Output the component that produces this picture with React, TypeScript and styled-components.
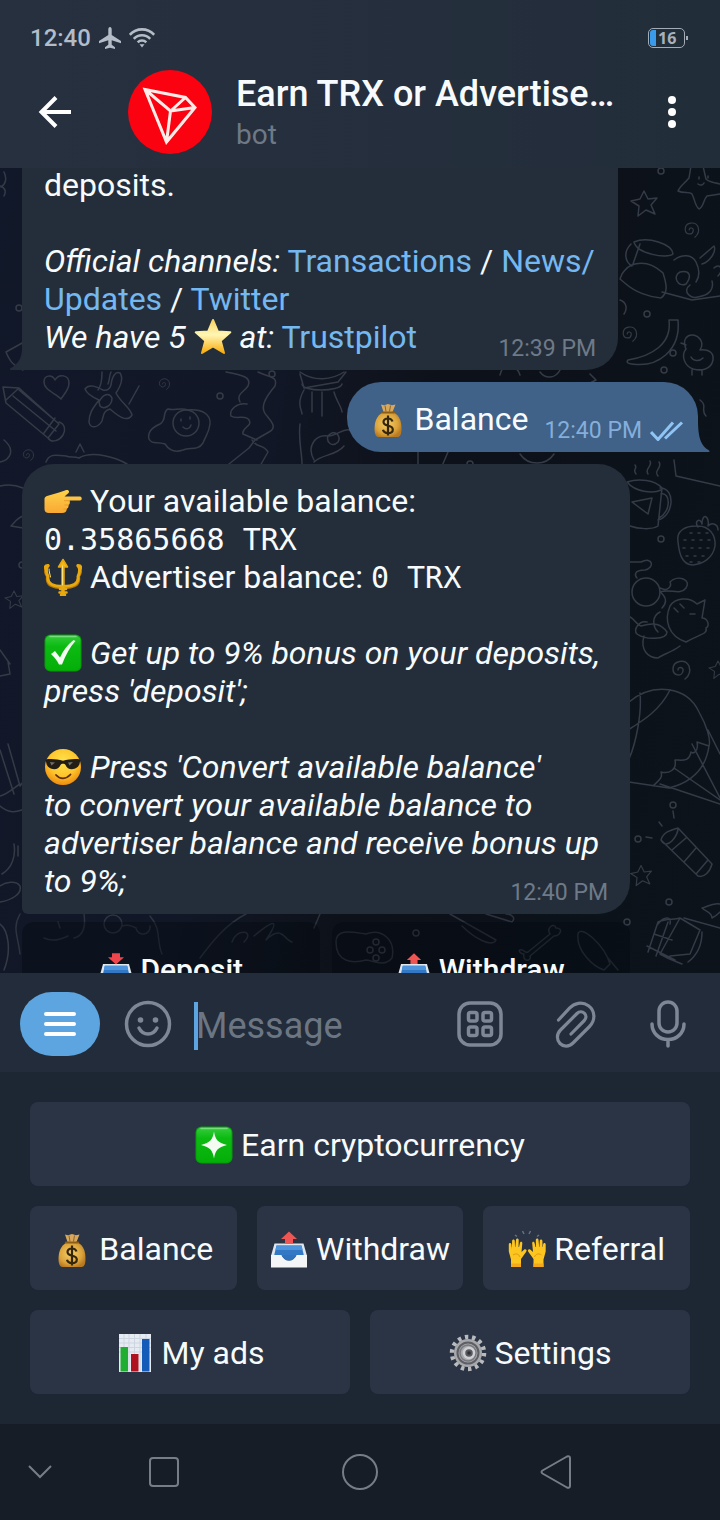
import React from 'react';
import styled, { createGlobalStyle, css } from 'styled-components';

const GlobalStyle = createGlobalStyle`
  *, *::before, *::after { box-sizing: border-box; }
  html, body, #root { height: 100%; }
  body { margin: 0; background: #161d27; font-family: Roboto, "Noto Sans", sans-serif; }
  button, input { font: inherit; color: inherit; border: 0; margin: 0; padding: 0; background: none; }
  button { cursor: pointer; }
  svg { display: block; }
`;

/* ---------- layout ---------- */

const Screen = styled.div`
  display: flex;
  flex-direction: column;
  height: 100vh;
  overflow: hidden;
  color: #f7fbfd;
`;

const Top = styled.header`
  flex: none;
  background: linear-gradient(90deg, #27303f, #222d3a);
`;

const StatusBar = styled.div`
  display: flex;
  align-items: center;
  gap: 8px;
  height: 56px;
  padding: 20px 32px 0 30px;
  color: #b4bcc8;
  font-size: 24px;
  line-height: 36px;
`;

const Clock = styled.span`
  font-weight: 500;
`;

const Spacer = styled.span`
  flex: 1;
`;

const Battery = styled.span`
  display: flex;
  align-items: center;
  gap: 1px;
`;

const BatteryCase = styled.span`
  display: flex;
  align-items: center;
  gap: 2px;
  width: 37px;
  height: 20px;
  padding: 0 1px;
  border: 1px solid #a3abb7;
  border-radius: 5px;
  font: 700 16px/18px "Noto Sans", sans-serif;
  color: #a9b0bb;
`;

const BatteryLevel = styled.span`
  width: 6px;
  height: 16px;
  border-radius: 3px 0 0 3px;
  background: #3a9bec;
`;

const BatteryTip = styled.span`
  width: 2px;
  height: 4px;
  background: #a3abb7;
`;

const TitleBar = styled.div`
  display: flex;
  align-items: center;
  height: 112px;
  padding: 0 24px 0 31px;
`;

const IconButton = styled.button<{ $width?: number }>`
  flex: none;
  display: grid;
  place-items: center;
  width: ${(p) => p.$width ?? 48}px;
  height: 48px;
`;

const Avatar = styled.div`
  flex: none;
  margin: 0 24px 0 49px;
`;

const Names = styled.div`
  flex: 1;
  min-width: 0;
`;

const Title = styled.h1`
  margin: 0 0 4px;
  font-size: 36px;
  line-height: 42px;
  font-weight: 500;
  white-space: nowrap;
  overflow: hidden;
`;

const Subtitle = styled.p`
  margin: 0;
  font-size: 28px;
  line-height: 32px;
  color: #6f7985;
`;

const Chat = styled.main`
  position: relative;
  flex: 1;
  min-height: 0;
  overflow: hidden;
  background: linear-gradient(100deg, #111829 0%, #111726 36%, #0d1119 56%, #0c131a 100%);
`;

const Wallpaper = styled.svg`
  position: absolute;
  inset: 0;
  width: 100%;
  height: 100%;
`;

const Messages = styled.div`
  position: relative;
  display: flex;
  flex-direction: column;
  align-items: flex-start;
  padding: 0 22px;
  margin-top: -2px;
`;

type BubbleKind = 'continued' | 'outgoing' | 'withKeyboard';

const bubbleKinds = {
  continued: css`
    width: 596px;
    max-width: 100%;
    padding-top: 0;
    border-radius: 0 0 32px 0;
    background: #242e3a;
  `,
  outgoing: css`
    align-self: flex-end;
    padding-right: 14px;
    border-radius: 34px 34px 0 34px;
    background: #406188;
  `,
  withKeyboard: css`
    width: 608px;
    max-width: 100%;
    border-radius: 32px 32px 32px 6px;
    background: #242e3b;
  `,
};

const Bubble = styled.article<{ $kind: BubbleKind }>`
  position: relative;
  padding: 18px 22px 14px;
  margin-bottom: 12px;
  font-size: 32px;
  line-height: 38px;
  ${(p) => bubbleKinds[p.$kind]}
`;

const Tail = styled.svg<{ $side: 'left' | 'right' }>`
  position: absolute;
  bottom: 0;
  ${(p) => p.$side}: -12px;
`;

const Text = styled.p`
  margin: 0;
`;

const LastLine = styled.div`
  display: flex;
  align-items: flex-end;
  justify-content: space-between;
  gap: 16px;
`;

const Meta = styled.span<{ $out?: boolean }>`
  display: flex;
  align-items: center;
  gap: 8px;
  margin-bottom: -7px;
  font-size: 23px;
  line-height: 28px;
  white-space: nowrap;
  color: ${(p) => (p.$out ? '#85aedb' : '#6f7a88')};
`;

const Link = styled.a`
  color: #74b8f2;
  text-decoration: none;
`;

const Code = styled.code`
  font-family: "DejaVu Sans Mono", monospace;
  font-size: 30px;
  line-height: 30px;
`;

const EmojiSvg = styled.svg`
  display: inline-block;
  vertical-align: top;
`;

const InlineKeyboard = styled.div`
  display: grid;
  grid-template-columns: 1fr 1fr;
  gap: 12px;
  width: 608px;
  max-width: 100%;
  margin-top: -4px;
`;

const InlineKey = styled.button`
  height: 96px;
  border-radius: 12px;
  background: rgba(2, 8, 14, 0.36);
  font-size: 30px;
  line-height: 36px;
  font-weight: 500;
`;

const Composer = styled.form`
  flex: none;
  display: flex;
  align-items: center;
  height: 99px;
  padding: 3px 28px 0 20px;
  background: #222c3a;
`;

const MenuButton = styled.button`
  flex: none;
  display: grid;
  place-items: center;
  width: 80px;
  height: 64px;
  margin-right: 24px;
  border-radius: 32px;
  background: #5da5e0;
`;

const Field = styled.label`
  position: relative;
  flex: 1;
  min-width: 0;
  display: flex;
  align-items: center;
  margin-left: 24px;
  padding-top: 4px;
`;

const Caret = styled.span`
  position: absolute;
  left: -2px;
  width: 4px;
  height: 48px;
  background: #5da5e0;
`;

const MessageInput = styled.input`
  width: 100%;
  height: 48px;
  font-size: 36px;
  line-height: 42px;
  outline: none;
  caret-color: transparent;
  &::placeholder { color: #6c7683; opacity: 1; }
`;

const Tools = styled.div`
  display: flex;
  gap: 46px;
`;

const ReplyKeyboard = styled.div`
  flex: none;
  display: flex;
  flex-direction: column;
  gap: 20px;
  padding: 30px;
  background: #1d2633;
`;

const KeyRow = styled.div`
  display: flex;
  gap: 20px;
`;

const Key = styled.button`
  flex: 1 1 0;
  min-width: 0;
  height: 84px;
  padding-top: 2px;
  border-radius: 8px;
  background: #2a3445;
  font-size: 32px;
  line-height: 38px;
  white-space: nowrap;
`;

const SystemNav = styled.nav`
  flex: none;
  display: grid;
  grid-template-columns: 66px 1fr 1fr 1fr 66px;
  height: 96px;
  background: #161d27;
`;

const NavButton = styled.button<{ $end?: boolean }>`
  display: flex;
  align-items: center;
  justify-content: ${(p) => (p.$end ? 'flex-end' : 'center')};
  padding-right: ${(p) => (p.$end ? 8 : 0)}px;
`;

/* ---------- emoji ---------- */

type EmojiName =
  | 'star' | 'bag' | 'point' | 'trident' | 'check' | 'cool'
  | 'inbox' | 'outbox' | 'sparkle' | 'hands' | 'chart' | 'gear';

const tray = (
  <>
    <path d="M4.500 13.500h29L37 26H1z" fill="#dfe7ee" />
    <path d="M6.500 15.500h25l2.500 10.500H4z" fill="#3378c4" />
    <path d="M6.500 15.500h25l1 4.500h-27z" fill="#4d94dd" />
    <path d="M1 25h10.500c1.500 3.500 4 5.500 7.500 5.500s6-2 7.500-5.500H37v12.500H1z" fill="#f4f5f6" />
    <path d="M11.500 25h15c-1.500 3.500-4 5.500-7.500 5.500s-6-2-7.500-5.500z" fill="#2f72bd" />
  </>
);

const greenTile = (
  <>
    <rect x="0.500" y="0.500" width="37" height="37" rx="6" fill="#079a0b" />
    <rect x="1.500" y="1.500" width="35" height="35" rx="5" fill="url(#tile)" />
    <path d="M6 2.500h26" stroke="#75e07a" strokeWidth="1.500" strokeLinecap="round" />
  </>
);

const hand = (
  <>
    <path
      d="M3 37V29.500L.8 21.500V14.500c0-2 2.400-2 2.600 0l.5 5 .2-8.500c.1-2 2.600-2 2.700 0l.3 8L8 10c.1-2 2.600-2 2.700 0l-.2 9.500 1.400-6.500c.5-2 2.700-1.500 2.400.4L13.500 22l2.500-2.200c1.800-1.300 3.300.6 2.200 2L13 29v8z"
      fill="#fdc51f"
    />
    <path d="M3.500 17v7h8v-7z" fill="#fdc51f" />
    <path d="M5 25c3-2 6-1 7 2" stroke="#e39a12" strokeWidth="1" fill="none" />
    <path d="M3 33.500h10V37H3z" fill="#f3a91a" />
  </>
);

const emojiArt: Record<EmojiName, React.ReactNode> = {
  star: (
    <path
      d="M19 2l4.800 11.500 12.500.8-9.600 8.400 3.300 12.300L19 28.500 8 35l3.300-12.300-9.600-8.400 12.500-.8z"
      fill="url(#gold)"
      stroke="url(#gold)"
      strokeWidth="2"
      strokeLinejoin="round"
    />
  ),
  bag: (
    <>
      <path d="M12 4.500l3 .8L19 4l4 1.300 3.500-.8L23.500 12h-9z" fill="#d9a85c" />
      <path d="M16 5.500l1 6M21.500 5.500l-1 6" stroke="#8f6426" strokeWidth="1" />
      <path d="M13.500 12.500h11.500C31 16 32.500 22 32.500 29c0 5-1.500 8-4 8h-19c-2.500 0-4-3-4-8 0-7 2-13 8-16.500z" fill="url(#bag)" />
      <path d="M13 12.500h12" stroke="#8b5d16" strokeWidth="2.200" strokeLinecap="round" />
      <path d="M23.500 21.500c-.6-2-2.300-3-4.500-3-2.600 0-4.500 1.300-4.500 3.600 0 5 9.300 2.400 9.300 7.300 0 2.300-2 3.700-4.800 3.700-2.500 0-4.500-1.200-5-3.300M19 15.500v20" fill="none" stroke="#33260d" strokeWidth="2.200" />
    </>
  ),
  point: (
    <>
      <path
        d="M.5 17c0-1.500 1-2.500 2.500-3L15 10.500 21 8.500c3-1.300 5 .5 3.500 2.500L20.500 14.500H36c2.300 0 2.300 4 0 4H25.500c.7 2 .4 3.500-1 4.500.3 2-.4 3.300-1.800 4 0 2.500-1.500 4-4.700 4H5c-3 0-4.500-1.500-4.500-4z"
        fill="url(#skin)"
      />
      <path d="M25 18.700h-5M24.500 23h-4M22.500 27h-3" stroke="#e79c25" strokeWidth="1" fill="none" />
    </>
  ),
  trident: (
    <g fill="none" stroke="#e8a80f" strokeLinecap="round" strokeLinejoin="round">
      <path d="M4 8C0 10 .8 14 3.500 18.500 2 27 8 29.500 19 29.500s17-2.500 15.500-11C37.200 14 38 10 34 8" stroke="#b87808" strokeWidth="3" />
      <path d="M4 7.500c-2.500 3-2 6.500 0 11-1 7.500 5 9.800 15 9.800s16-2.300 15-9.800c2-4.500 2.500-8 0-11" strokeWidth="3" />
      <path d="M4 7.500C1 7 .5 9 1.500 11M34 7.500c3-.5 3.500 1.500 2.500 3.500" strokeWidth="2.200" />
      <path d="M19 7v27" strokeWidth="3.500" />
      <path d="M19 1.500l4.500 7.500h-9z" fill="#f2b916" strokeWidth="1.500" />
      <path d="M16 31h6M15.500 34.500h7M17 37h4" strokeWidth="2.500" />
      <path d="M18.500 8v19M5 11c0 3 1 5 1.500 8" stroke="#ffe27a" strokeWidth="1" />
    </g>
  ),
  check: (
    <>
      {greenTile}
      <path d="M7 20l4-3 5 6.500C19 17 23 11 29.500 6l2 1C26 13 21.500 21 18 30.500h-3C13 26.500 10 22.500 7 20z" fill="#f4fbf3" />
    </>
  ),
  cool: (
    <>
      <circle cx="19" cy="19" r="18" fill="url(#face)" />
      <path d="M1.500 11.500c7-1 12 0 17.500 1.300 5.500-1.300 10.500-2.300 17.500-1.300l-.8 3.500c-1 7-12 8.500-14.200 2-.7-1.800-4.300-1.800-5 0-2.200 6.500-13.200 5-14.200-2z" fill="#221e16" />
      <path d="M6 14l5 .6-3.500 3zM24 14.500l5-.4-3.500 3.300z" fill="#6f7066" />
      <path d="M12 27c4 4.500 10 4.500 14.500-.5" fill="none" stroke="#5d2d08" strokeWidth="1.800" strokeLinecap="round" />
    </>
  ),
  inbox: (
    <>
      {tray}
      <path d="M14.500 1.500h9V6h4.500l-9 8-9-8h4.500z" fill="#ee464c" />
    </>
  ),
  outbox: (
    <>
      {tray}
      <path d="M19 1.500L27 9h-4v4.500h-8V9h-4z" fill="#ef5552" />
    </>
  ),
  sparkle: (
    <>
      {greenTile}
      <path d="M19 5.500c1.500 8.500 3.500 11 13 13.500-9.500 2.500-11.500 5-13 13.500C17.500 24 15.500 21.500 6 19c9.500-2.500 11.500-5 13-13.500z" fill="#f4fbf3" />
    </>
  ),
  hands: (
    <>
      <g>{hand}</g>
      <g transform="matrix(-1 0 0 1 38.500 0)">{hand}</g>
      <path d="M7 5l2 1.500M14.500 1l1.500 3M22.500 1L21 4M31 5l-2 1.500" stroke="#66717f" strokeWidth="1.500" />
    </>
  ),
  chart: (
    <>
      <path d="M3 0h32v38H3z" fill="#e6ebf2" />
      <path d="M3 4.500h32M3 9h32M3 13.500h32M3 18h32M8 0v13M13 0v38M18.500 0v20M24 0v38M30 0v5" stroke="#cdd5e1" strokeWidth="1" />
      <path d="M4.500 13h7.500v24.500H4.500z" fill="#1fae31" />
      <path d="M15 20h7.500v17.500H15z" fill="#b0111f" />
      <path d="M26 5h7.500v32.500H26z" fill="#155cb8" />
    </>
  ),
  gear: (
    <>
      <circle cx="19" cy="19" r="16" fill="none" stroke="#b9babd" strokeWidth="4.500" strokeDasharray="3.400 3.780" />
      <circle cx="19" cy="19" r="14" fill="#a7a8ac" />
      <circle cx="19" cy="19" r="10.500" fill="none" stroke="#5d5f64" strokeWidth="2" />
      <circle cx="19" cy="19" r="8" fill="none" stroke="#77797e" strokeWidth="1.500" />
      <circle cx="20" cy="19" r="5" fill="#56585d" stroke="#cfd0d3" strokeWidth="2.500" />
      <circle cx="20" cy="19" r="1.800" fill="#2c323c" />
    </>
  ),
};

const Emoji = ({ name, size = 38 }: { name: EmojiName; size?: number }) => (
  <EmojiSvg width={size} height={size} viewBox="0 0 38 38" aria-hidden="true">
    {emojiArt[name]}
  </EmojiSvg>
);

const GradientDefs = styled.svg`
  position: absolute;
`;

const SharedGradients = () => (
  <GradientDefs width="0" height="0" aria-hidden="true">
    <defs>
      <linearGradient id="gold" x1="0" y1="0" x2="0" y2="1">
        <stop offset="0" stopColor="#f6d263" />
        <stop offset="0.450" stopColor="#fff6b4" />
        <stop offset="1" stopColor="#f9ac0b" />
      </linearGradient>
      <linearGradient id="skin" x1="0" y1="0" x2="0" y2="1">
        <stop offset="0" stopColor="#ffd24a" />
        <stop offset="1" stopColor="#f9a832" />
      </linearGradient>
      <linearGradient id="tile" x1="0" y1="0" x2="0" y2="1">
        <stop offset="0" stopColor="#35cc3c" />
        <stop offset="0.300" stopColor="#0cbb12" />
        <stop offset="1" stopColor="#04ae08" />
      </linearGradient>
      <radialGradient id="face" cx="0.500" cy="0.350" r="0.650">
        <stop offset="0" stopColor="#ffe34d" />
        <stop offset="0.600" stopColor="#fdc52c" />
        <stop offset="1" stopColor="#f08c0e" />
      </radialGradient>
      <radialGradient id="bag" cx="0.450" cy="0.450" r="0.600">
        <stop offset="0" stopColor="#f6cf66" />
        <stop offset="0.700" stopColor="#dba23b" />
        <stop offset="1" stopColor="#b97a20" />
      </radialGradient>
    </defs>
  </GradientDefs>
);

/* ---------- wallpaper doodles ---------- */

const STAR = 'M0-13l4 8 9-1-6 7 4 9-9-4-8 6 1-10-8-5 9-2z';
const SWIRL = 'M-1 0c0-4 6-3 5 1-1 6-10 5-10-2 0-8 12-11 16-3 2 6 0 10-4 13';

const at = (x: number, y: number, d: string, scale = 1, turn = 0) => (
  <path key={`${x}-${y}`} transform={`translate(${x} ${y}) rotate(${turn}) scale(${scale})`} d={d} />
);

const Doodles = () => (
  <Wallpaper viewBox="0 168 720 805" preserveAspectRatio="xMidYMin slice" aria-hidden="true">
    <g fill="none" stroke="#353b46" strokeWidth="1.500" strokeLinecap="round" strokeLinejoin="round">
      {/* stars */}
      {at(644, 204, STAR)}
      {at(14, 600, STAR, 0.7)}
      {at(641, 876, STAR, 0.8)}
      {at(718, 670, STAR, 0.7)}
      {/* swirls */}
      {at(690, 230, SWIRL, 0.8)}
      {at(628, 334, SWIRL, 0.8)}
      {at(163, 384, SWIRL, 0.6)}
      {at(27, 455, SWIRL, 0.6)}
      {at(679, 670, SWIRL)}
      {/* bubbles */}
      {[[661, 171], [647, 314], [673, 353], [664, 370], [19, 308], [220, 396], [272, 374], [470, 464],
        [661, 539], [638, 839], [673, 805], [669, 902], [627, 922], [416, 933], [22, 565]].map(([x, y]) => (
        <circle key={`${x}.${y}`} cx={x} cy={y} r="3" />
      ))}
      {/* smiling starfish */}
      <path d="M720 184c-6-2-10-1-14-5l-3-13h-12l-2 12c-5 6-9 8-11 13 6 3 11 0 14 3 3 6 3 12 7 15 5-2 4-9 8-13l13-2M699 177v2M708 176v2M698 184c3 2 5 1 6-1" />
      {/* dog with cap */}
      <path d="M622 274c4-6 8-9 13-10 14-3 22 4 28 9 4 12 5 20-2 25-12-1-26-6-35-14l-6-5zM634 242c14-6 38 2 39 12-6 5-36 0-39-12zm-3 2c-8 8-6 18 1 22M640 244l-7 20M674 260c8-6 18-6 22 2 4 8 4 14 0 20M700 258l14-12c3 6-5 16-12 18M680 272c-8 4-2 16 6 12 6-8 4-14-6-12zM690 285c-8 6 0 14 8 12 12-2 16-8 14-16M714 268c6-6 10 2 4 8M662 292l30 8 28-4" />
      {/* wavy ribbon */}
      <path d="M628 360c24-4 44-16 41-40h9c3 30-20 48-46 44-4 0-6-2-4-4z" />
      {/* duckling */}
      <path d="M686 349c-6-14 8-18 14-10 3 4 2 8 0 11 8-1 14 2 13 10-2 10-12 11-20 9-9-3-12-14-7-20zM686 345l-5-2M703 358c-4 4-10 3-12-1M692 370v5M702 370v5" />
      {/* flower and heart near the edge */}
      <path d="M620 300c6 2 8 8 4 14M4 172c3 6 2 12-3 15M0 186c6 2 6 6 4 10M24 342L6 352c4 10 8 14 17 18" />
      <path d="M61 399c-6-6-17-9-17-17 0-7 8-8 11-2 4-7 14-5 14 3 0 7-5 11-8 16z" />
      {/* pencil */}
      <path d="M3 387l16 1 40 36-11 14-42-35zM6 400l13-12M13 396l43 35M19 390l39 33M44 433l11-15M48 438c4 6 12 2 15-3 3-5 2-11-4-13" />
      {/* propeller plane */}
      <path d="M99 400c-7-3-12-6-14-11 4-6 12-2 18 1 4 1 7-1 8-5 1-8 4-14 9-12 4 6 0 14-4 20 5 10 14 14 16 22-5 8-14 1-22-6-6 2-6 4-8 12-4 7-12 8-13 1 0-10 5-15 10-22zM99 402c4-8 10-10 13-4 0 8-8 12-12 8zM139 386l-10 18M102 372c0 10-1 14-4 18M108 384c2-5 1-8 3-12" />
      {/* fried egg */}
      <path d="M149 439c-2-8 4-12 11-15 7-4 2-12 8-15 6 2 12-2 20 1 14-1 23 4 22 14-1 9-4 11-7 19-5 8-13 4-20 7-8 3-14 0-18-6-8-3-13 1-16-5z" />
      <circle cx="186" cy="423" r="13" />
      <path d="M181 419v2M190 417v2M183 427c3 3 7 2 8-2" />
      {/* squid and octopus */}
      <path d="M226 372c16 3 26 5 22 14-4 6-12 8-8 16M247 404c-10-2-18 6-16 12M231 416c6 4 14-2 18 4s-8 8-6 14l14 6M258 372c12 6 20 4 17 14-10 12-16 22-8 30 5 6 10 12 2 16l-14 8-6 8-20 16M252 440c4 8 12 4 16 12l-8 14M300 374l4 14 34-6 8-10M302 384c0 8 38 8 40 0M300 372c14 10 32 8 44 0M304 390c-8 14-2 20-2 24M312 392v20M322 392v24M334 392c2 8 8 16 8 20M300 424c-2 16 2 28 2 40M314 460c-8-14 2-26 14-24 10 0 14-8 22-6M328 436c6-8 14 0 10 6-6 6-12 0-10-6zM344 446c-8 10-22 8-30 16" />
      {/* hedgehog behind the big message */}
      <path d="M46 462c4-10 12-6 20-6 4 2 8 0 13 2 14-8 38 0 48 6M76 452l4-8 4 8M0 462c10-2 16-12 4-22M0 486c8-2 16-1 23 2M23 516c-6 2-8 6-12 10l12 2M10 664l-10-14M0 676l10-2-2-12" />
      {/* shapes around the outgoing message */}
      <path d="M418 452v18c8 6 14 2 24-4l6-14M520 454c8 12 26 12 34 0M500 375c2-12 16-12 20 0M540 372c6 8 16 6 20-2M590 374l6 6-8 4M700 400c8 6 0 10 6 16" />
      {/* mug */}
      <path d="M627 482c12-4 28-2 35 6l-4 38c-6 4-20 3-28 0M627 482c8 10 26 12 34 8M661 494c10-2 10 18-2 24M660 488c16 0 14 28-2 32M632 502l20-4-4 16zM636 474c-4-5 2-5-1-9M648 474c-4-6 5-7 2-13M658 476c-5-6 5-8 1-14M674 460l2 16 44 10" />
      {/* strawberry */}
      <path d="M678 542c-2-12 8-16 18-16 14-1 20 10 19 20-2 12-12 18-22 19-12 0-14-14-15-23zM698 527c-4-6 2-10 4-3 0-12 8-8 6 2 4-4 10-2 10 4" />
      <path strokeDasharray="2 6" d="M684 540h28M683 548h28M686 556h22M690 533h18M690 562h12" />
      {/* monkey and cat */}
      <circle cx="646" cy="592" r="14" />
      <path d="M627 562h14c12-6 14 6 4 8-12 0-10 6-8 8M660 588c8 4 12-2 10-6 8-8 22-2 16 6-6 8-16 0-26 4 8 6 6 12 2 16M627 616c6 0 8 8 14 10 14-4 20-2 26 6 0 8-22 8-30 2-4-4 2-14 10-12M670 606c-6 14-2 30 16 36 14-8 22-8 20-14 4-2 2-10-4-10l3-18-8 4c-8-8-22-6-27 2zM680 604l4 4M678 612l-4-4M690 614h5M644 636c-4 14 4 22 14 22 6-4 14-6 22-12M660 612c-8 4-8 14-2 20" />
      {/* hot air balloon */}
      <path d="M629 702c24-20 58-16 70 10 8 14 12 28 10 34M629 782l40 6c16-4 36-14 40-42l-12-4c2 10-4 12-6 10-2 10-8 8-16 8 2 10-6 14-14 12 2 6-2 8-8 14M640 693c2 20-4 50-11 66M670 690c-10 20-26 30-42 40M660 784l60 20M674 768l46 32M692 744l28 54M708 730l12 24" />
      {/* torch */}
      <path d="M661 840c2-8 10-10 17-12l34 36c-2 8-8 14-14 12zM661 840c6 12 18-6 17-12M672 850l14-12M684 862l12-14M696 874l12-14M652 838l-6-1M662 826l-3-4M674 818l-1-7" />
      {/* gift, cat head and sleeping rocket */}
      <path d="M648 952l10-30c8-4 16-2 22-4l-20 36c10 6 18 8 22 10M647 946l28 14M654 934l18 6M668 922l-12 34M684 918l36 10M680 918l20 12-10 24-20 2M702 932c0 14-6 24-14 30M720 904c-8-2-14 4-18 4 4 4 10 4 10 10 4-2 6-4 8-6M658 924c6-8 14-8 12 0" />
      <path opacity="0.800" d="M20 914c-8 14-2 22 0 40M84 914c2 14-2 22-10 24M44 938c8 4 16 2 24-2M58 922l2 6M104 924a9 9 0 1 0 18 0 9 9 0 1 0-18 0M122 926c6-2 10 0 14 2a6 6 0 1 0 14-2M150 916c12 14 6 24 12 38M200 958c12-16 26-34 46-44M232 942c4-14 24-12 12 0M254 936c24-20 24-14 12 4 16-16 18 0 26 2M320 914l-6 14M336 942c0-14 16-10 30-8 16-6 30 6 26 24-8 10-20 2-26 2-14 4-30 2-30-18M450 914l46 26c-4 8-22-2-34-14M486 914l26 8c4-4 0-8-6-8M520 950c4-2 4 4 8 2l22-18c-4-6 4-12 6-6 8 0 4 8-2 8l-24 20c2 6-8 6-6-2-4 0-6-4-4-4zM578 934c2-10 26 10 32 30l-6 6c-12-4-28-20-26-36zM608 958l10 12" />
      {[[376, 942], [370, 950], [382, 950], [376, 958]].map(([x, y]) => (
        <circle key={`pad${x}.${y}`} cx={x} cy={y} r="3" />
      ))}
      {/* items at the left edge */}
      <path d="M0 750l14 44M8 744l12 42 3-4M0 806c10 8 16 6 22 4M0 796c8-2 16-10 20-12M14 844c2 12-2 24-12 30M18 846v10M0 902c12-2 22-8 20-16-4-6-14-4-20 0M4 970c8-20 4-40-4-46" />
    </g>
  </Wallpaper>
);

/* ---------- app ---------- */

const TOOL = '#7d8795';
const NAV = '#777d87';

export default function App() {
  return (
    <Screen>
      <GlobalStyle />
      <SharedGradients />
      <Top>
        <StatusBar>
          <Clock>12:40</Clock>
          <svg width="22" height="22" viewBox="0 0 22 22" fill="#b4bcc8" aria-label="Airplane mode">
            <path d="M11 0c1.100 0 1.700 1 1.700 2.300V8L22 14v2.200l-9.300-3v4.600l3.300 2.500V22l-5-1.300L6 22v-1.700l3.300-2.500v-4.600L0 16.200V14l9.300-6V2.300C9.300 1 9.900 0 11 0z" />
          </svg>
          <svg width="26" height="20" viewBox="0 0 26 20" fill="none" stroke="#b4bcc8" strokeWidth="2.600" aria-label="Wi-Fi">
            <path d="M.8 6.800C7.500-.5 18.500-.5 25.200 6.800M4.800 10.800c4.500-4.800 11.900-4.800 16.400 0M8.700 14.400c2.400-2.500 6.200-2.500 8.600 0" />
            <path d="M10.500 16.200h5L13 19.500z" fill="#b4bcc8" stroke="none" />
          </svg>
          <Spacer />
          <Battery>
            <BatteryCase>
              <BatteryLevel />
              16
            </BatteryCase>
            <BatteryTip />
          </Battery>
        </StatusBar>
        <TitleBar>
          <IconButton aria-label="Back">
            <svg width="34" height="34" viewBox="0 0 34 34" fill="none" stroke="#fff" strokeWidth="4">
              <path d="M33 17H4M18 2.500L3.500 17 18 31.500" />
            </svg>
          </IconButton>
          <Avatar>
            <svg width="84" height="84" viewBox="0 0 84 84" role="img" aria-label="TRON">
              <circle cx="42" cy="42" r="42" fill="#fb0210" />
              <path
                d="M17 19.500l40.500 8L67 37.500 38.500 72zM17 19.500L42.500 41 57.500 27.500M42.500 41L67 37.500M42.500 41l-4 31"
                fill="none"
                stroke="#ffece9"
                strokeWidth="3"
                strokeLinejoin="miter"
              />
            </svg>
          </Avatar>
          <Names>
            <Title>Earn TRX or Advertise…</Title>
            <Subtitle>bot</Subtitle>
          </Names>
          <IconButton aria-label="More options">
            <svg width="8" height="34" viewBox="0 0 8 34" fill="#fff">
              <circle cx="4" cy="5" r="4" />
              <circle cx="4" cy="17" r="4" />
              <circle cx="4" cy="29" r="4" />
            </svg>
          </IconButton>
        </TitleBar>
      </Top>

      <Chat>
        <Doodles />
        <Messages>
          <Bubble $kind="continued">
            <Text>
              deposits.
              <br />
              <br />
              <em>Official channels:</em> <Link href="#transactions">Transactions</Link> /{' '}
              <Link href="#news">
                News/
                <br />
                Updates
              </Link>{' '}
              / <Link href="#twitter">Twitter</Link>
            </Text>
            <LastLine>
              <Text>
                <em>
                  We have 5 <Emoji name="star" /> at:
                </em>{' '}
                <Link href="#trustpilot">Trustpilot</Link>
              </Text>
              <Meta>12:39 PM</Meta>
            </LastLine>
            <Tail $side="left" width="12" height="22" viewBox="0 0 12 22" fill="#242e3a">
              <path d="M12 0v22H1c-1.500 0-1.500-1.500 0-2C8 16 12 10 12 0z" />
            </Tail>
          </Bubble>

          <Bubble $kind="outgoing">
            <LastLine>
              <Text>
                <Emoji name="bag" /> Balance
              </Text>
              <Meta $out>
                12:40 PM
                <svg width="34" height="20" viewBox="0 0 34 20" fill="none" stroke="#8fc4f5" strokeWidth="3" aria-label="Read">
                  <path d="M1 11l7 7.500L23 1.500M15 17.500L32 1.500" />
                </svg>
              </Meta>
            </LastLine>
            <Tail $side="right" width="12" height="32" viewBox="0 0 12 32" fill="#406188">
              <path d="M0 0v32h10.500c1.500 0 1.500-1 0-2C4 26 0 20 0 0z" />
            </Tail>
          </Bubble>

          <Bubble $kind="withKeyboard">
            <Text>
              <Emoji name="point" /> Your available balance:
              <br />
              <Code>0.35865668 TRX</Code>
              <br />
              <Emoji name="trident" /> Advertiser balance: <Code>0 TRX</Code>
              <br />
              <br />
              <Emoji name="check" /> <em>Get up to 9% bonus on your deposits, press 'deposit';</em>
              <br />
              <br />
              <Emoji name="cool" />{' '}
              <em>
                Press 'Convert available balance'
                <br />
                to convert your available balance to
                <br />
                advertiser balance and receive bonus up
              </em>
            </Text>
            <LastLine>
              <Text>
                <em>to 9%;</em>
              </Text>
              <Meta>12:40 PM</Meta>
            </LastLine>
          </Bubble>

          <InlineKeyboard>
            <InlineKey>
              <Emoji name="inbox" size={34} /> Deposit
            </InlineKey>
            <InlineKey>
              <Emoji name="outbox" size={34} /> Withdraw
            </InlineKey>
          </InlineKeyboard>
        </Messages>
      </Chat>

      <Composer onSubmit={(e) => e.preventDefault()}>
        <MenuButton type="button" aria-label="Bot menu">
          <svg width="32" height="26" viewBox="0 0 32 26" stroke="#fff" strokeWidth="4" strokeLinecap="round">
            <path d="M2 3h28M2 13h28M2 23h28" />
          </svg>
        </MenuButton>
        <IconButton type="button" aria-label="Emoji">
          <svg width="48" height="48" viewBox="0 0 48 48" fill="none" stroke={TOOL} strokeWidth="3.500" strokeLinecap="round">
            <circle cx="24" cy="24" r="21.500" />
            <path d="M15 28c4 8 14 8 18 0" />
            <circle cx="16.500" cy="20" r="2.800" fill={TOOL} stroke="none" />
            <circle cx="31.500" cy="20" r="2.800" fill={TOOL} stroke="none" />
          </svg>
        </IconButton>
        <Field>
          <MessageInput type="text" placeholder="Message" aria-label="Message" />
          <Caret />
        </Field>
        <Tools>
          <IconButton type="button" aria-label="Bot keyboard">
            <svg width="48" height="48" viewBox="0 0 48 48" fill="none" stroke={TOOL} strokeWidth="3.500">
              <rect x="3" y="3" width="42" height="42" rx="11" />
              <rect x="12.500" y="12.500" width="8.500" height="8.500" rx="2" />
              <rect x="27" y="12.500" width="8.500" height="8.500" rx="2" />
              <rect x="12.500" y="27" width="8.500" height="8.500" rx="2" />
              <rect x="27" y="27" width="8.500" height="8.500" rx="2" />
            </svg>
          </IconButton>
          <IconButton type="button" aria-label="Attach">
            <svg width="48" height="48" viewBox="-2 0 48 48" fill="none" stroke={TOOL} strokeWidth="3.200" strokeLinecap="round">
              <path d="M6.500 20L17.500 8.200C22 3.200 30 1 36.500 5.800 43.500 11 43.500 20.500 37.500 26.500L21 43C17 47 11.500 47 8 43.500S4.500 34 8.500 30L25 13.500c2.200-2.200 5.500-2.200 7.500-.2s2 5-.2 7.200L19 34" />
            </svg>
          </IconButton>
          <IconButton type="button" aria-label="Voice message">
            <svg width="48" height="48" viewBox="0 0 48 48" fill="none" stroke={TOOL} strokeWidth="3.500" strokeLinecap="round">
              <rect x="15" y="2" width="18" height="30" rx="9" />
              <path d="M8 24c0 9 7 15.500 16 15.500S40 33 40 24M24 39.500V46" />
            </svg>
          </IconButton>
        </Tools>
      </Composer>

      <ReplyKeyboard>
        <KeyRow>
          <Key>
            <Emoji name="sparkle" /> Earn cryptocurrency
          </Key>
        </KeyRow>
        <KeyRow>
          <Key>
            <Emoji name="bag" /> Balance
          </Key>
          <Key>
            <Emoji name="outbox" /> Withdraw
          </Key>
          <Key>
            <Emoji name="hands" /> Referral
          </Key>
        </KeyRow>
        <KeyRow>
          <Key>
            <Emoji name="chart" /> My ads
          </Key>
          <Key>
            <Emoji name="gear" /> Settings
          </Key>
        </KeyRow>
      </ReplyKeyboard>

      <SystemNav>
        <NavButton $end aria-label="Hide keyboard">
          <svg width="36" height="20" viewBox="0 0 36 20" fill="none" stroke={NAV} strokeWidth="2">
            <path d="M7 4l11 11L29 4" />
          </svg>
        </NavButton>
        <NavButton aria-label="Recent apps">
          <svg width="36" height="36" viewBox="0 0 36 36" fill="none" stroke={NAV} strokeWidth="2">
            <rect x="4" y="4" width="28" height="28" rx="3" />
          </svg>
        </NavButton>
        <NavButton aria-label="Home">
          <svg width="36" height="36" viewBox="0 0 36 36" fill="none" stroke={NAV} strokeWidth="2">
            <circle cx="18" cy="18" r="17" />
          </svg>
        </NavButton>
        <NavButton aria-label="Go back">
          <svg width="36" height="36" viewBox="0 0 36 36" fill="none" stroke={NAV} strokeWidth="2" strokeLinejoin="round">
            <path d="M4.500 16.500L29 2.500c1.500-.8 3 0 3 1.500v28c0 1.500-1.500 2.300-3 1.500L4.500 19.500c-1.300-.8-1.300-2.200 0-3z" />
          </svg>
        </NavButton>
      </SystemNav>
    </Screen>
  );
}
